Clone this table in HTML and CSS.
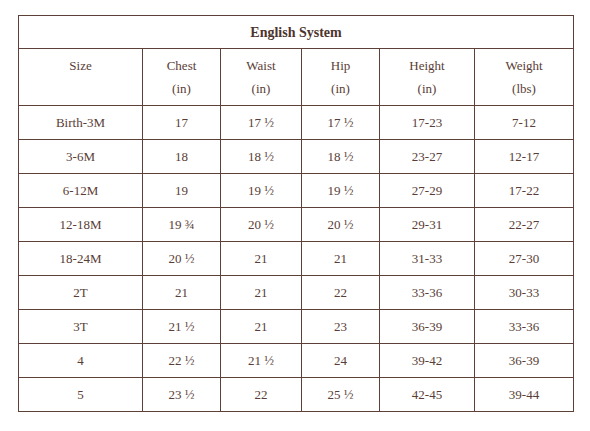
FILE: index.html
```html
<!DOCTYPE html>
<html>
<head>
<meta charset="utf-8">
<link rel="stylesheet" href="styles.css">
</head>
<body>
<table class="chart">
  <colgroup>
    <col class="c1"><col class="c2"><col class="c3"><col class="c4"><col class="c5"><col class="c6">
  </colgroup>
  <tr class="title"><th colspan="6">English System</th></tr>
  <tr class="head">
    <td>Size</td><td>Chest<br>(in)</td><td>Waist<br>(in)</td><td>Hip<br>(in)</td><td>Height<br>(in)</td><td>Weight<br>(lbs)</td>
  </tr>
  <tr><td>Birth-3M</td><td>17</td><td>17 ½</td><td>17 ½</td><td>17-23</td><td>7-12</td></tr>
  <tr><td>3-6M</td><td>18</td><td>18 ½</td><td>18 ½</td><td>23-27</td><td>12-17</td></tr>
  <tr><td>6-12M</td><td>19</td><td>19 ½</td><td>19 ½</td><td>27-29</td><td>17-22</td></tr>
  <tr><td>12-18M</td><td>19 ¾</td><td>20 ½</td><td>20 ½</td><td>29-31</td><td>22-27</td></tr>
  <tr><td>18-24M</td><td>20 ½</td><td>21</td><td>21</td><td>31-33</td><td>27-30</td></tr>
  <tr><td>2T</td><td>21</td><td>21</td><td>22</td><td>33-36</td><td>30-33</td></tr>
  <tr><td>3T</td><td>21 ½</td><td>21</td><td>23</td><td>36-39</td><td>33-36</td></tr>
  <tr><td>4</td><td>22 ½</td><td>21 ½</td><td>24</td><td>39-42</td><td>36-39</td></tr>
  <tr><td>5</td><td>23 ½</td><td>22</td><td>25 ½</td><td>42-45</td><td>39-44</td></tr>
</table>
</body>
</html>
```
FILE: styles.css
```css
html, body {
  margin: 0;
  padding: 0;
  background: #ffffff;
}
body {
  padding: 15px 0 0 18px;
  font-family: "Liberation Serif", "Times New Roman", serif;
  color: #5a3d36;
  font-size: 13px;
}
.chart {
  border-collapse: collapse;
  table-layout: fixed;
  width: 555px;
}
.c1 { width: 124px; }
.c2 { width: 78px; }
.c3 { width: 81px; }
.c4 { width: 78px; }
.c5 { width: 95px; }
.c6 { width: 99px; }
.chart th, .chart td {
  border: 1px solid #5d4037;
  text-align: center;
  vertical-align: middle;
  padding: 0;
  height: 33px;
  line-height: 23px;
}
.title th {
  font-size: 14px;
  font-weight: bold;
  color: #4e342e;
  height: 32px;
}
.head td {
  height: 51px;
  padding-top: 5px;
  vertical-align: top;
}
```
